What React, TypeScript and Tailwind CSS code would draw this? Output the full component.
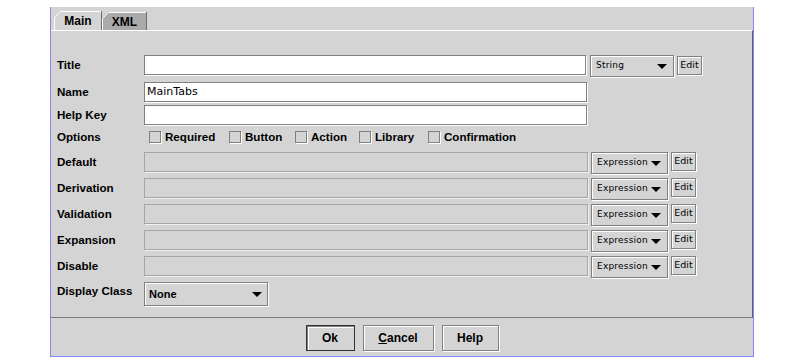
import { FunctionComponent, ReactElement } from 'react';

const labelFont = "font-['Liberation_Sans',Arial,sans-serif] font-bold text-[11.6px] text-black";
const smallFont = "font-['DejaVu_Sans',sans-serif] text-[9px] text-black";
const etched = 'border border-[#808080] shadow-[inset_1px_1px_0_#fff,1px_1px_0_#fff]';

const expressionRows = ['Default', 'Derivation', 'Validation', 'Expansion', 'Disable'];

const options = [
  { name: 'Required', width: 'w-[80px]' },
  { name: 'Button', width: 'w-[66px]' },
  { name: 'Action', width: 'w-[64px]' },
  { name: 'Library', width: 'w-[69px]' },
  { name: 'Confirmation', width: 'w-[100px]' },
];

/**
 * Small black down arrow used in the combo boxes
 */
const Arrow: FunctionComponent = (): ReactElement => (
  <svg width="10" height="5" viewBox="0 0 10 5" className="shrink-0">
    <polygon points="0,0 10,0 5,5" fill="#000" />
  </svg>
);

interface ComboProps {
  readonly text: string;
  readonly width: string;
}

const Combo: FunctionComponent<ComboProps> = ({ text, width }): ReactElement<ComboProps> => {
  return (
    <div className={`${width} h-[22px] ${etched} flex flex-row items-center justify-between pl-[5px] pr-[6px] bg-[#d4d4d4]`}>
      <span className={`${smallFont} tracking-[0.2px]`}>{text}</span>
      <Arrow />
    </div>
  );
};

const EditButton: FunctionComponent = (): ReactElement => (
  <div className={`w-[25px] h-[19px] ${etched} flex items-center justify-center font-['DejaVu_Sans',sans-serif] text-[9.5px] text-black`}>
    Edit
  </div>
);

interface RowLabelProps {
  readonly text: string;
}

const RowLabel: FunctionComponent<RowLabelProps> = ({ text }): ReactElement<RowLabelProps> => (
  <div className={`w-[87px] h-[19px] shrink-0 flex items-center ${labelFont}`}>
    {text}
  </div>
);

interface TabProps {
  readonly name: string;
  readonly selected: boolean;
  readonly width: number;
  readonly height: number;
}

const Tab: FunctionComponent<TabProps> = ({ name, selected, width, height }): ReactElement<TabProps> => {
  return (
    <div className="relative flex items-center justify-center" style={{ width, height }}>
      <svg width={width} height={height} className="absolute left-0 top-0">
        <polygon
          points={`0,${height} 0,6 6,0 ${width},0 ${width},${height}`}
          fill={selected ? '#d4d4d4' : '#aaaaaa'}
        />
        <polyline
          points={`0.5,${height} 0.5,6.5 6.5,0.5 ${width - 1},0.5`}
          fill="none"
          stroke="#ffffff"
        />
        <line x1={width - 0.5} y1="0" x2={width - 0.5} y2={height} stroke="#6e6e6e" />
      </svg>
      <span className="relative font-['Liberation_Sans',Arial,sans-serif] font-bold text-[12px] text-black pt-[1px]">{name}</span>
    </div>
  );
};

interface ButtonProps {
  readonly width: string;
  readonly isDefault?: boolean;
  readonly children: React.ReactNode;
}

const DialogButton: FunctionComponent<ButtonProps> = ({ width, isDefault, children }): ReactElement<ButtonProps> => {
  const border = isDefault
    ? 'border border-[#333333] shadow-[inset_1px_1px_0_#808080,inset_2px_2px_0_#fff]'
    : 'border border-[#808080] shadow-[inset_1px_1px_0_#fff,1px_1px_0_#fff]';
  return (
    <div className={`${width} h-[26px] ${border} flex items-center justify-center font-['Liberation_Sans',Arial,sans-serif] font-bold text-[12px] text-black`}>
      {children}
    </div>
  );
};

const App: FunctionComponent = (): ReactElement => {
  return (
    <div className="min-h-screen w-full bg-white pl-[50px] pt-[7px]">
      <div className="w-[704px] h-[350px] bg-[#d4d4d4] border-l border-r border-b border-[#8585f5] flex flex-col">
        {/* tabs */}
        <div className="h-[23px] shrink-0 flex flex-row items-end pl-[3px]">
          <Tab name="Main" selected width={48} height={19} />
          <Tab name="XML" selected={false} width={45} height={18} />
        </div>

        {/* tab content */}
        <div className="h-[288px] shrink-0 border-t border-t-white border-r border-r-[#5c5c80] border-b border-b-[#7a7a7a] pl-[6px] pt-[24px] flex flex-col">
          {/* Title */}
          <div className="h-[22px] flex flex-row items-start">
            <RowLabel text="Title" />
            <div className="w-[442px] h-[20px] bg-white border border-[#808080] shadow-[1px_1px_0_#fff]" />
            <div className="ml-[4px]">
              <Combo text="String" width="w-[84px]" />
            </div>
            <div className="ml-[3px] mt-[1px]">
              <EditButton />
            </div>
          </div>

          {/* Name */}
          <div className="mt-[5px] h-[20px] flex flex-row items-start">
            <RowLabel text="Name" />
            <div className="w-[443px] h-[20px] bg-white border border-[#808080] shadow-[1px_1px_0_#fff] flex items-center pl-[2px] font-['DejaVu_Sans',sans-serif] text-[11px] text-black">
              MainTabs
            </div>
          </div>

          {/* Help Key */}
          <div className="mt-[3px] h-[20px] flex flex-row items-start">
            <RowLabel text="Help Key" />
            <div className="w-[443px] h-[20px] bg-white border border-[#808080] shadow-[1px_1px_0_#fff]" />
          </div>

          {/* Options */}
          <div className="mt-[3px] h-[18px] flex flex-row items-center">
            <div className={`w-[87px] shrink-0 ${labelFont}`}>Options</div>
            <div className="flex flex-row items-center pl-[5px]">
              {
                options.map((option) => (
                  <div key={`option-${option.name}`} className={`${option.width} flex flex-row items-center gap-[4px]`}>
                    <div className="w-[12px] h-[12px] border border-[#808080] shadow-[1px_1px_0_#fff] shrink-0" />
                    <span className={labelFont}>{option.name}</span>
                  </div>
                ))
              }
            </div>
          </div>

          {/* Expression rows */}
          <div className="mt-[6px] flex flex-col gap-[3px]">
            {
              expressionRows.map((row) => (
                <div key={`row-${row}`} className="h-[23px] flex flex-row items-start">
                  <RowLabel text={row} />
                  <div className="w-[444px] h-[20px] border border-[#a6a6a6] shadow-[1px_1px_0_#f0f0f0]" />
                  <div className="ml-[3px]">
                    <Combo text="Expression" width="w-[77px]" />
                  </div>
                  <div className="ml-[3px]">
                    <EditButton />
                  </div>
                </div>
              ))
            }
          </div>

          {/* Display Class */}
          <div className="mt-[3px] h-[24px] flex flex-row items-start">
            <div className={`w-[87px] h-[17px] shrink-0 flex items-center ${labelFont}`}>Display Class</div>
            <div className={`w-[124px] h-[24px] ${etched} flex flex-row items-center justify-between pl-[4px] pr-[5px]`}>
              <span className="font-['Liberation_Sans',Arial,sans-serif] font-bold text-[11px] text-black">None</span>
              <Arrow />
            </div>
          </div>
        </div>

        {/* buttons */}
        <div className="h-[38px] shrink-0 flex flex-row items-center justify-center gap-[8px] pt-[1px]">
          <DialogButton width="w-[49px]" isDefault>Ok</DialogButton>
          <DialogButton width="w-[71px]"><span><span className="underline">C</span>ancel</span></DialogButton>
          <DialogButton width="w-[57px]">Help</DialogButton>
        </div>
      </div>
    </div>
  );
};

export default App;
